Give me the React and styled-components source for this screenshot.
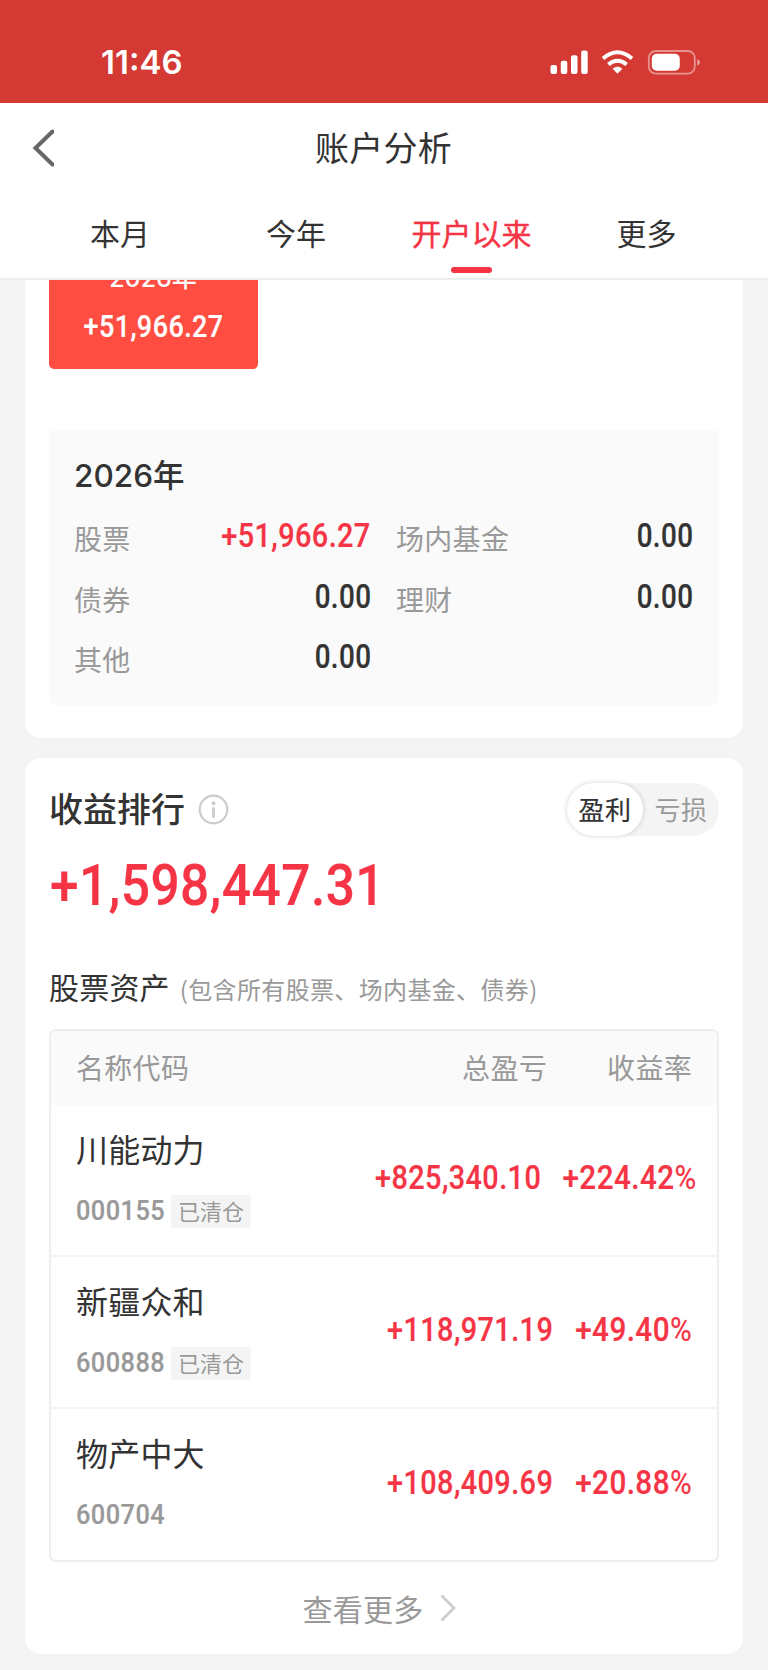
import React, { useState } from 'react';
import styled, { createGlobalStyle } from 'styled-components';

const GlobalStyle = createGlobalStyle`
    * {
        box-sizing: border-box;
    }

    body {
        margin: 0;
        background-color: #f4f4f4;
        font-family: "Noto Sans CJK SC", sans-serif;
        color: #333;
    }

    button {
        border: 0;
        padding: 0;
        margin: 0;
        background: none;
        font-family: inherit;
        color: inherit;
        cursor: pointer;
    }
`;

const Page = styled.div`
    width: 768px;
    height: 1670px;
    overflow: hidden;
    display: flex;
    flex-direction: column;
`;

const StatusBar = styled.div`
    height: 103px;
    flex-shrink: 0;
    display: flex;
    justify-content: space-between;
    padding: 44px 67px 0 101px;
    background-color: #d43a33;
`;

const Clock = styled.span`
    font-family: Inter, sans-serif;
    font-size: 33px;
    font-weight: 600;
    line-height: 37px;
    color: #fff;
`;

const StatusIcons = styled.svg`
    width: 151px;
    height: 36px;
`;

const TopBar = styled.header`
    height: 177px;
    flex-shrink: 0;
    background-color: #fff;
    border-bottom: 2px solid #eee;
`;

const TitleRow = styled.div`
    height: 90px;
    display: grid;
    grid-template-columns: 100px 1fr 100px;
    align-items: center;
`;

const BackButton = styled.button`
    width: 60px;
    height: 40px;
    padding-left: 32px;
    display: flex;
    align-items: center;
`;

const PageTitle = styled.h1`
    margin: 0 1px 3px 0;
    font-size: 34px;
    font-weight: 400;
    line-height: 50px;
    letter-spacing: 0.3px;
    text-align: center;
`;

const Tabs = styled.nav`
    height: 85px;
    display: flex;
    padding: 0 32px;
`;

const Tab = styled.button`
    width: 176px;
    display: flex;
    flex-direction: column;
    align-items: center;
    padding-top: 16px;
    font-size: 30px;
    line-height: 46px;
    color: ${props => props.$active ? '#f53445' : '#333'};
    -webkit-text-stroke: ${props => props.$active ? '0.4px' : '0'};

    &::after {
        content: "";
        width: 41px;
        height: 6px;
        margin-top: 12px;
        border-radius: 3px;
        background-color: ${props => props.$active ? '#f53445' : 'transparent'};
    }

    &:nth-child(3) {
        width: 175px;
    }

    &:last-child {
        width: 175px;
    }
`;

const Content = styled.main`
    height: 1390px;
    overflow: hidden;
    padding: 0 25px;
    display: flex;
    flex-direction: column;
    gap: 20px;
`;

const Card = styled.section`
    background-color: #fff;
    border-radius: ${props => props.$cut ? '0 0 16px 16px' : '16px'};
    height: ${props => props.$height}px;
    flex-shrink: 0;
    padding: 0 24px;
`;

const Num = styled.span`
    display: inline-block;
    font-family: Roboto, sans-serif;
    font-size: ${props => props.$size || 33.5}px;
    font-weight: 500;
    line-height: 1.2;
    letter-spacing: 0.5px;
    white-space: nowrap;
    transform: scaleX(${props => props.$narrow || 0.86});
    transform-origin: ${props => props.$origin || 'right'} center;
    color: ${props => props.$color || '#333'};
    -webkit-text-stroke: 0.2px;
`;

const Percent = styled.span`
    font-weight: 400;
`;

const YearTile = styled.div`
    width: 209px;
    height: 89px;
    display: flex;
    flex-direction: column;
    align-items: center;
    justify-content: flex-end;
    padding-bottom: 24px;
    border-radius: 0 0 5px 5px;
    background-color: #ff4d41;
    color: #fff;
    overflow: hidden;
`;

const TileYear = styled.span`
    font-family: Inter, "Noto Sans CJK SC", sans-serif;
    font-size: 25px;
    font-weight: 500;
    line-height: 36px;
    margin-bottom: 12px;
    margin-right: 1px;
`;

const YearPanel = styled.div`
    height: 275px;
    margin-top: 61px;
    padding: 26px 25px 0;
    border-radius: 6px;
    background-color: #fafafa;
`;

const PanelTitle = styled.h2`
    margin: 0 0 12px;
    font-family: Inter, "Noto Sans CJK SC", sans-serif;
    font-size: 31.5px;
    font-weight: 500;
    line-height: 40px;
`;

const AssetGrid = styled.dl`
    margin: 0;
    display: grid;
    grid-template-columns: 297px 297px;
    column-gap: 25px;
    grid-auto-rows: 60.4px;
`;

const AssetItem = styled.div`
    display: flex;
    justify-content: space-between;
    align-items: center;
`;

const AssetLabel = styled.dt`
    font-size: 28px;
    line-height: 40px;
    letter-spacing: 0.3px;
    color: #999;
`;

const AssetValue = styled.dd`
    margin: 0;
    line-height: 40px;
`;

const RankHeader = styled.div`
    display: flex;
    align-items: center;
    height: 53px;
    margin-top: 25px;
`;

const RankTitle = styled.h2`
    margin: 0 13px 4px 0;
    font-size: 34px;
    font-weight: 500;
    line-height: 50px;
`;

const InfoIcon = styled.svg`
    width: 31px;
    height: 31px;
    margin-right: auto;
`;

const Toggle = styled.div`
    display: flex;
    width: 152px;
    height: 53px;
    border-radius: 27px;
    background-color: #f4f4f4;
`;

const ToggleOption = styled.button`
    width: 76px;
    height: 53px;
    padding-bottom: 2px;
    border-radius: 27px;
    font-size: 26px;
    line-height: 48px;
    letter-spacing: 0.4px;
    color: ${props => props.$active ? '#333' : '#999'};
    background-color: ${props => props.$active ? '#fff' : 'transparent'};
    box-shadow: ${props => props.$active ? '0 0 5px rgba(0, 0, 0, 0.18)' : 'none'};
    -webkit-text-stroke: ${props => props.$active ? '0.2px' : '0'};
`;

const TotalProfit = styled.div`
    height: 70px;
    margin-top: 15px;
    padding-left: 1px;
    display: flex;
    align-items: center;
`;

const SectionTitle = styled.h3`
    display: flex;
    align-items: center;
    height: 46px;
    margin: 42px 0 20px;
    font-size: 30px;
    font-weight: 400;
    letter-spacing: 0.2px;
    gap: 10px;
`;

const SectionNote = styled.span`
    font-size: 24px;
    letter-spacing: 0.35px;
    color: #999;
    padding-top: 5px;
`;

const Table = styled.div`
    height: 533px;
    border: 2px solid #eee;
    border-radius: 7px;
    overflow: hidden;
`;

const TableHead = styled.div`
    height: 74px;
    display: flex;
    align-items: center;
    padding: 0 25px 3px;
    background-color: #fafafa;
    font-size: 28px;
    letter-spacing: 0.3px;
    color: #999;
`;

const HeadCell = styled.span`
    width: ${props => props.$width ? props.$width + 'px' : 'auto'};
    flex: ${props => props.$width ? 'none' : 1};
    text-align: ${props => props.$width ? 'right' : 'left'};
`;

const StockRow = styled.div`
    height: 152px;
    display: flex;
    padding: 0 ${props => props.$wide ? 20 : 25}px 0 25px;
    border-bottom: 2px solid #f4f4f4;

    &:last-child {
        border-bottom: 0;
    }
`;

const StockInfo = styled.div`
    flex: 1;
    padding-top: 20px;
`;

const StockName = styled.div`
    font-size: 32px;
    line-height: 46px;
    letter-spacing: 0.2px;
`;

const StockCode = styled.div`
    height: 34px;
    margin-top: 23px;
    display: flex;
    align-items: center;
`;

const CodeBox = styled.span`
    width: 95px;
    line-height: 30px;
    margin-top: 1px;
`;

const ClearedTag = styled.span`
    width: 80px;
    height: 33px;
    border-radius: 2px;
    font-size: 22px;
    line-height: 31px;
    text-align: center;
    color: #999;
    background-color: #f4f4f4;
`;

const StockValue = styled.div`
    width: ${props => props.$width}px;
    display: flex;
    justify-content: flex-end;
    align-items: center;
    padding-bottom: 4px;
`;

const MoreButton = styled.button`
    width: 100%;
    height: 92px;
    padding-right: 9px;
    display: flex;
    align-items: center;
    justify-content: center;
    gap: 17px;
    font-size: 30px;
    letter-spacing: 0.2px;
    color: #999;
`;

const red = '#f53445';

const assets = [
    { label: '股票', value: '+51,966.27', color: red },
    { label: '场内基金', value: '0.00' },
    { label: '债券', value: '0.00' },
    { label: '理财', value: '0.00' },
    { label: '其他', value: '0.00' },
];

const stocks = [
    { name: '川能动力', code: '000155', cleared: true, profit: '+825,340.10', rate: '+224.42' },
    { name: '新疆众和', code: '600888', cleared: true, profit: '+118,971.19', rate: '+49.40' },
    { name: '物产中大', code: '600704', cleared: false, profit: '+108,409.69', rate: '+20.88' },
];

const tabs = ['本月', '今年', '开户以来', '更多'];

export default function App() {
    const [tab, setTab] = useState('开户以来');
    const [side, setSide] = useState('盈利');

    return (
        <>
            <GlobalStyle />
            <Page>
                <StatusBar>
                    <Clock>11:46</Clock>
                    <StatusIcons viewBox="0 0 151 36">
                        <g fill="#fff">
                            <rect x="0.5" y="21" width="6.5" height="9" rx="2" />
                            <rect x="10.8" y="16.8" width="6.5" height="13.2" rx="2" />
                            <rect x="21" y="11.3" width="6.5" height="18.7" rx="2" />
                            <rect x="31.2" y="6.5" width="6.5" height="23.5" rx="2" />
                            <path d="M67.5 29.3 L62.9 24.8 Q67.5 21.1 72.1 24.8 Z" stroke="#fff" strokeWidth="0.6" strokeLinejoin="round" />
                        </g>
                        <g fill="none" stroke="#fff" strokeWidth="3.9">
                            <path d="M58.4 20.4 Q67.5 13 76.6 20.4" />
                            <path d="M53 14.4 Q67.5 2.2 82 14.4" />
                        </g>
                        <rect x="98.8" y="7" width="46" height="22.6" rx="7" fill="none" stroke="#fff" strokeOpacity="0.45" strokeWidth="1.8" />
                        <rect x="101.8" y="9.8" width="28" height="17" rx="5" fill="#fff" />
                        <path d="M147.2 15 Q150 16.2 150 18.3 Q150 20.4 147.2 21.6 Z" fill="#fff" fillOpacity="0.5" />
                    </StatusIcons>
                </StatusBar>
                <TopBar>
                    <TitleRow>
                        <BackButton aria-label="返回">
                            <svg width="22" height="38" viewBox="0 0 22 38">
                                <path d="M20.5 2.5 L3.5 19 L20.5 35.5" fill="none" stroke="#666" strokeWidth="4" strokeLinecap="round" />
                            </svg>
                        </BackButton>
                        <PageTitle>账户分析</PageTitle>
                    </TitleRow>
                    <Tabs>
                        {tabs.map(name => (
                            <Tab key={name} $active={tab === name} onClick={() => setTab(name)}>{name}</Tab>
                        ))}
                    </Tabs>
                </TopBar>
                <Content>
                    <Card $cut $height={458}>
                        <YearTile>
                            <TileYear>2026年</TileYear>
                            <Num $size={31} $origin="center" $narrow={0.87} $color="#fff">+51,966.27</Num>
                        </YearTile>
                        <YearPanel>
                            <PanelTitle>2026年</PanelTitle>
                            <AssetGrid>
                                {assets.map(item => (
                                    <AssetItem key={item.label}>
                                        <AssetLabel>{item.label}</AssetLabel>
                                        <AssetValue>
                                            <Num $narrow={item.color ? 0.86 : 0.83} $color={item.color}>{item.value}</Num>
                                        </AssetValue>
                                    </AssetItem>
                                ))}
                            </AssetGrid>
                        </YearPanel>
                    </Card>
                    <Card $height={896}>
                        <RankHeader>
                            <RankTitle>收益排行</RankTitle>
                            <InfoIcon viewBox="0 0 31 31">
                                <circle cx="15.5" cy="15.5" r="13.8" fill="none" stroke="#ccc" strokeWidth="2.2" />
                                <circle cx="15.5" cy="9.3" r="2" fill="#ccc" />
                                <path d="M15.5 14.5 V22.5" stroke="#ccc" strokeWidth="3" strokeLinecap="round" />
                            </InfoIcon>
                            <Toggle>
                                {['盈利', '亏损'].map(name => (
                                    <ToggleOption key={name} $active={side === name} onClick={() => setSide(name)}>{name}</ToggleOption>
                                ))}
                            </Toggle>
                        </RankHeader>
                        <TotalProfit>
                            <Num $size={57} $origin="left" $narrow={0.903} $color={red}>+1,598,447.31</Num>
                        </TotalProfit>
                        <SectionTitle>
                            股票资产
                            <SectionNote>(包含所有股票、场内基金、债券)</SectionNote>
                        </SectionTitle>
                        <Table>
                            <TableHead>
                                <HeadCell>名称代码</HeadCell>
                                <HeadCell $width={160}>总盈亏</HeadCell>
                                <HeadCell $width={145}>收益率</HeadCell>
                            </TableHead>
                            {stocks.map(stock => (
                                <StockRow key={stock.code} $wide={stock.rate.length > 6}>
                                    <StockInfo>
                                        <StockName>{stock.name}</StockName>
                                        <StockCode>
                                            <CodeBox><Num $size={28.5} $origin="left" $narrow={0.89} $color="#999">{stock.code}</Num></CodeBox>
                                            {stock.cleared && <ClearedTag>已清仓</ClearedTag>}
                                        </StockCode>
                                    </StockInfo>
                                    <StockValue $width={180}><Num $color={red}>{stock.profit}</Num></StockValue>
                                    <StockValue $width={stock.rate.length > 6 ? 156 : 139}>
                                        <Num $narrow={0.885} $color={red}>{stock.rate}<Percent>%</Percent></Num>
                                    </StockValue>
                                </StockRow>
                            ))}
                        </Table>
                        <MoreButton>
                            查看更多
                            <svg width="16" height="28" viewBox="0 0 16 28">
                                <path d="M1.5 1.5 L14 14 L1.5 26.5" fill="none" stroke="#ccc" strokeWidth="2.6" />
                            </svg>
                        </MoreButton>
                    </Card>
                </Content>
            </Page>
        </>
    );
}
